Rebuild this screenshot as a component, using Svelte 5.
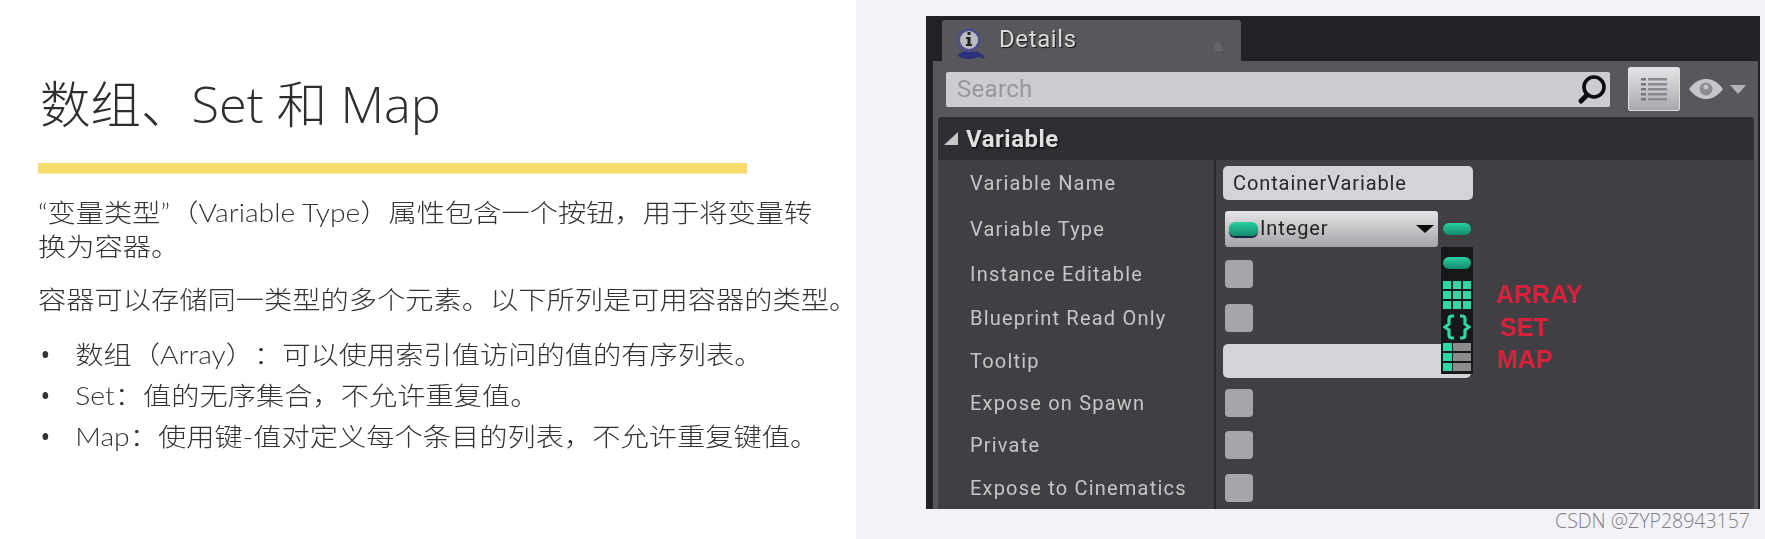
<script>
  const rows = [
    { label: 'Variable Name', kind: 'name' },
    { label: 'Variable Type', kind: 'type' },
    { label: 'Instance Editable', kind: 'check' },
    { label: 'Blueprint Read Only', kind: 'check' },
    { label: 'Tooltip', kind: 'tip' },
    { label: 'Expose on Spawn', kind: 'check' },
    { label: 'Private', kind: 'check' },
    { label: 'Expose to Cinematics', kind: 'check' }
  ];
  const bullets = [
    '数组（Array）：可以使用索引值访问的值的有序列表。',
    'Set：值的无序集合，不允许重复值。',
    'Map：使用键-值对定义每个条目的列表，不允许重复键值。'
  ];
</script>

<div class="page">
  <section class="left">
    <h1>数组、Set 和 Map</h1>
    <div class="bar"></div>
    <div class="copy">
      <p class="first">“变量类型”（Variable Type）属性包含一个按钮，用于将变量转<br />换为容器。</p>
      <p class="second">容器可以存储同一类型的多个元素。以下所列是可用容器的类型。</p>
      <ul>
        {#each bullets as b}
          <li>{b}</li>
        {/each}
      </ul>
    </div>
  </section>

  <section class="right">
    <div class="panel">
      <div class="tabbar">
        <div class="tab">
          <svg class="info" viewBox="0 0 30 34" width="30" height="34">
            <ellipse cx="13" cy="29" rx="11" ry="4" fill="#2c2f7a" />
            <path d="M20 26l8 6" stroke="#2c2f7a" stroke-width="3" />
            <circle cx="13" cy="14" r="12" fill="#4d4f86" />
            <circle cx="13" cy="14" r="9" fill="#b9bcc0" />
            <rect x="11.5" y="6" width="3" height="3" fill="#222" />
            <path d="M10 11h4.500v7H16v2h-6v-2h1.500v-5H10z" fill="#222" />
          </svg>
          <span class="tabname">Details</span>
          <span class="tabcaret"></span>
        </div>
      </div>
      <div class="body">
        <div class="toolbar">
          <div class="search">
            <span>Search</span>
            <svg viewBox="0 0 32 32" width="32" height="32">
              <circle cx="18" cy="14" r="10" fill="none" stroke="#0c0c0e" stroke-width="3.600" />
              <path d="M11 22l-6 6" stroke="#0c0c0e" stroke-width="5" stroke-linecap="round" />
            </svg>
          </div>
          <div class="listbtn">
            <svg viewBox="0 0 28 28" width="28" height="28">
              {#each [3, 8, 13, 18, 23] as y}
                <rect x="1" y={y} width="5" height="2.500" fill="#77777c" />
                <rect x="8" y={y} width="19" height="2.500" fill="#8a8a8f" />
              {/each}
            </svg>
          </div>
          <svg class="eye" viewBox="0 0 36 22" width="36" height="22">
            <path d="M1 11C7 3 13 1 18 1s11 2 17 10c-6 8-12 10-17 10S7 19 1 11z" fill="#c6c6ca" />
            <circle cx="18" cy="11" r="6.500" fill="#8c8c90" />
            <circle cx="18" cy="9" r="2.500" fill="#c6c6ca" />
          </svg>
          <span class="eyecaret"></span>
        </div>
        <div class="section">
          <div class="sechead">
            <span class="tri"></span>
            <span>Variable</span>
          </div>
          <div class="details">
            {#each rows as r}
              <div class="label">{r.label}</div>
              <div class="value">
                {#if r.kind === 'name'}
                  <div class="input">ContainerVariable</div>
                {:else if r.kind === 'type'}
                  <div class="dropdown">
                    <span class="pill small"></span>
                    <span class="dropname">Integer</span>
                    <span class="droparrow"></span>
                  </div>
                  <span class="pill top"></span>
                {:else if r.kind === 'tip'}
                  <div class="input tip"></div>
                {:else}
                  <div class="check"></div>
                {/if}
              </div>
            {/each}

            <div class="menu">
              <span class="pill"></span>
              <div class="grid3">
                {#each Array(9) as _}<i></i>{/each}
              </div>
              <svg class="braces" viewBox="0 0 28 26" width="28" height="26">
                <path d="M11 2H9Q6 2 6 5v5l-4 3 4 3v5q0 3 3 3h2M17 2h2q3 0 3 3v5l4 3-4 3v5q0 3-3 3h-2" fill="none" stroke="#2fd6a6" stroke-width="3.200" />
              </svg>
              <div class="mapgrid">
                {#each Array(3) as _}<i></i><b></b>{/each}
              </div>
            </div>
            <div class="notes">
              <span class="n1">ARRAY</span>
              <span class="n2">SET</span>
              <span class="n3">MAP</span>
            </div>
          </div>
        </div>
      </div>
    </div>
    <div class="mark">CSDN @ZYP28943157</div>
  </section>
</div>

<style>
  :global(body) {
    margin: 0;
    background: #fff;
  }
  .page {
    display: grid;
    grid-template-columns: 856px 1fr;
    width: 1765px;
    height: 539px;
    overflow: hidden;
  }
  .left {
    background: #fff;
    padding: 68px 0 0 38px;
    font-family: Lato, "Noto Sans CJK SC", sans-serif;
    color: #333;
    text-spacing-trim: space-all;
  }
  h1 {
    margin: 0 0 0 2px;
    font-family: "Open Sans", "Noto Sans CJK SC", sans-serif;
    font-size: 50.5px;
    font-weight: 300;
    line-height: 72px;
    color: #2e2e2e;
    white-space: nowrap;
  }
  .bar {
    width: 709px;
    height: 10px;
    margin-top: 23px;
    background: #f9dc6e;
    box-shadow: 0 1px 1px #fbeeb8;
  }
  .copy {
    width: 720px;
    margin-top: 22px;
    font-size: 25px;
    font-weight: 300;
    transform: scaleX(1.13);
    transform-origin: left top;
    white-space: nowrap;
  }
  p {
    margin: 0;
    line-height: 34px;
  }
  .second {
    margin-top: 19px;
  }
  ul {
    list-style: none;
    margin: 18px 0 0;
    padding: 0;
  }
  li {
    position: relative;
    line-height: 41px;
    padding-left: 33px;
  }
  li::before {
    content: "";
    position: absolute;
    left: 4px;
    top: 17px;
    width: 5px;
    height: 7px;
    border-radius: 50%;
    background: #333;
  }
  .right {
    background: #f2f2f7;
    padding: 16px 5px 0 70px;
    font-family: Roboto, "Liberation Sans", sans-serif;
  }
  .panel {
    height: 493px;
    background: #222226;
    display: flex;
    flex-direction: column;
    filter: blur(0.4px);
  }
  .tabbar {
    height: 45px;
    flex: none;
    display: flex;
    align-items: flex-end;
    padding-left: 16px;
  }
  .tab {
    width: 299px;
    height: 41px;
    background: #58585c;
    border-radius: 3px 3px 0 0;
    display: flex;
    align-items: center;
    padding-left: 14px;
    box-sizing: border-box;
    position: relative;
  }
  .info {
    flex: none;
    margin-top: 4px;
  }
  .tabname {
    margin-left: 13px;
    margin-top: -3px;
    font-size: 24px;
    letter-spacing: 0.6px;
    color: #dcdcdc;
    text-shadow: 1px 1px 1px #111;
  }
  .tabcaret {
    position: absolute;
    left: 270px;
    top: 21px;
    border-left: 6px solid transparent;
    border-right: 6px solid transparent;
    border-bottom: 10px solid #66666a;
  }
  .body {
    flex: 1;
    margin: 0 2px 0 7px;
    background: #58585c;
    display: flex;
    flex-direction: column;
    min-height: 0;
  }
  .toolbar {
    height: 56px;
    flex: none;
    display: flex;
    align-items: center;
    padding: 0 0 0 13px;
    box-sizing: border-box;
  }
  .search {
    width: 664px;
    height: 35px;
    background: #cdcdd1;
    border-radius: 2px;
    display: flex;
    align-items: center;
    justify-content: space-between;
    padding: 0 2px 0 11px;
    box-sizing: border-box;
    font-size: 24px;
    letter-spacing: 0.3px;
    color: #97979b;
  }
  .listbtn {
    width: 52px;
    height: 44px;
    margin-left: 18px;
    background: linear-gradient(#e4e4e6, #a9a9ad);
    border: 1px solid #ddd;
    border-radius: 2px;
    box-sizing: border-box;
    display: flex;
    align-items: center;
    justify-content: center;
  }
  .eye {
    margin-left: 8px;
  }
  .eyecaret {
    margin-left: 6px;
    border-left: 8px solid transparent;
    border-right: 8px solid transparent;
    border-top: 9px solid #b4b4b8;
  }
  .section {
    flex: 1;
    margin: 0 4px 0 5px;
    background: #404044;
    display: flex;
    flex-direction: column;
    min-height: 0;
    border-radius: 4px 4px 0 0;
  }
  .sechead {
    height: 43px;
    flex: none;
    background: #2f2f33;
    display: flex;
    align-items: center;
    padding-left: 6px;
    gap: 8px;
    font-size: 24px;
    font-weight: 700;
    letter-spacing: 0.5px;
    color: #e0e0e0;
    text-shadow: 1px 1px 2px #000;
    border-radius: 4px 4px 0 0;
  }
  .tri {
    width: 0;
    height: 0;
    border-left: 14px solid transparent;
    border-bottom: 13px solid #c8c8c8;
  }
  .details {
    flex: 1;
    position: relative;
    display: grid;
    grid-template-columns: 278px 1fr;
    grid-template-rows: 46px 46px 44px 43px 43px 42px 42px 43px;
  }
  .label {
    display: flex;
    align-items: center;
    padding-left: 32px;
    font-size: 20px;
    letter-spacing: 1.2px;
    color: #c6c6c6;
    border-right: 2px solid #28282b;
    white-space: nowrap;
  }
  .value {
    display: flex;
    align-items: center;
    padding-left: 7px;
    gap: 5px;
  }
  .input {
    width: 250px;
    height: 34px;
    background: #d4d4d8;
    border-radius: 5px;
    color: #26262a;
    font-size: 20px;
    letter-spacing: 0.9px;
    line-height: 34px;
    padding-left: 10px;
    box-sizing: border-box;
  }
  .input.tip {
    width: 248px;
  }
  .check {
    width: 28px;
    height: 28px;
    margin-left: 2px;
    border-radius: 4px;
    background: #a6a6aa;
  }
  .dropdown {
    width: 213px;
    height: 36px;
    margin-left: 2px;
    background: linear-gradient(#e6e6e8, #a4a4a8);
    border-radius: 3px;
    display: flex;
    align-items: center;
    padding-left: 4px;
    box-sizing: border-box;
    font-size: 20px;
    letter-spacing: 0.9px;
    color: #222;
  }
  .dropname {
    margin-left: 2px;
    margin-top: -2px;
  }
  .droparrow {
    margin-left: auto;
    margin-right: 4px;
    border-left: 9px solid transparent;
    border-right: 9px solid transparent;
    border-top: 8px solid #0c0c0e;
  }
  .pill {
    display: block;
    width: 28px;
    height: 12px;
    background: linear-gradient(#2bd0a0, #138a6c);
    border-radius: 6px;
    flex: none;
  }
  .pill.small {
    width: 29px;
    height: 14px;
    box-shadow: 0 2px 1px #124;
  }
  .pill.top {
    margin-top: -1px;
  }
  .menu {
    position: absolute;
    left: 503px;
    top: 87px;
    width: 32px;
    height: 127px;
    background: #17181a;
    display: flex;
    flex-direction: column;
    align-items: center;
    padding-top: 10px;
    box-sizing: border-box;
  }
  .grid3 {
    display: grid;
    grid-template-columns: repeat(3, 8px);
    grid-auto-rows: 8px;
    gap: 2px;
    margin-top: 12px;
  }
  .grid3 i {
    background: #2fd6a6;
  }
  .braces {
    margin-top: 5px;
  }
  .mapgrid {
    display: grid;
    grid-template-columns: 9px 18px;
    grid-auto-rows: 8px;
    gap: 2px 1px;
    margin-top: 3px;
  }
  .mapgrid i {
    background: #2fd6a6;
  }
  .mapgrid b {
    background: #8c8c8c;
  }
  .notes {
    position: absolute;
    inset: 0;
    pointer-events: none;
    font-family: "Liberation Sans", sans-serif;
    font-weight: 700;
    font-size: 25px;
    line-height: 25px;
    color: #d9213c;
  }
  .notes span {
    position: absolute;
  }
  .n1 {
    left: 558px;
    top: 122px;
  }
  .n2 {
    left: 562px;
    top: 155px;
  }
  .n3 {
    left: 559px;
    top: 187px;
  }
  .mark {
    position: absolute;
    right: 15px;
    top: 508px;
    font-family: "Open Sans", sans-serif;
    font-size: 19.5px;
    line-height: 26px;
    font-weight: 300;
    color: #808084;
  }
</style>
